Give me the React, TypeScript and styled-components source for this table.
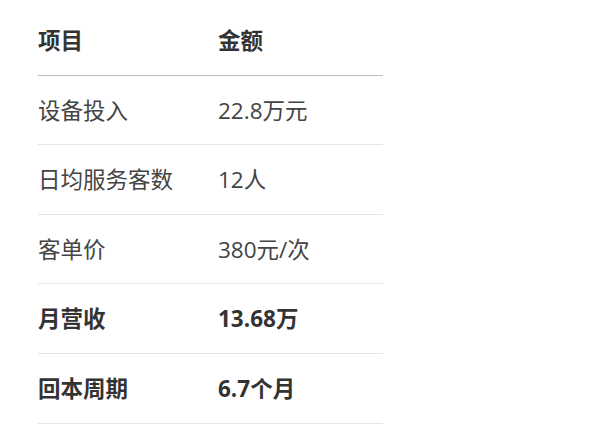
import React from "react";
import styled, { createGlobalStyle } from "styled-components";

const Global = createGlobalStyle`
  html, body { margin: 0; padding: 0; background: #ffffff; }
  body { font-family: "Open Sans", "Noto Sans CJK SC", sans-serif; color: #333333; }
`;

const Page = styled.div`
  padding: 6px 0 0 38px;
`;

const Table = styled.table`
  width: 345px;
  border-collapse: collapse;
  font-size: 22.5px;
`;

const Cell = styled.td<{ $bold?: boolean }>`
  padding: 21px 0 19px;
  line-height: 28.6px;
  text-align: left;
  font-weight: ${(p) => (p.$bold ? 700 : 400)};
  color: ${(p) => (p.$bold ? "#333333" : "#444444")};
  border-bottom: 1px solid #e5e5e5;
  &:first-child { width: 180px; }
`;

const HeadCell = styled.th`
  padding: 21px 0 19px;
  line-height: 28.6px;
  text-align: left;
  font-weight: 700;
  color: #333333;
  border-bottom: 1px solid #bdbdbd;
  &:first-child { width: 180px; }
`;

const rows = [
  { item: "设备投入", amount: "22.8万元" },
  { item: "日均服务客数", amount: "12人" },
  { item: "客单价", amount: "380元/次" },
  { item: "月营收", amount: "13.68万", bold: true },
  { item: "回本周期", amount: "6.7个月", bold: true },
];

export default function App() {
  return (
    <Page>
      <Global />
      <Table>
        <thead>
          <tr>
            <HeadCell>项目</HeadCell>
            <HeadCell>金额</HeadCell>
          </tr>
        </thead>
        <tbody>
          {rows.map((r) => (
            <tr key={r.item}>
              <Cell $bold={r.bold}>{r.item}</Cell>
              <Cell $bold={r.bold}>{r.amount}</Cell>
            </tr>
          ))}
        </tbody>
      </Table>
    </Page>
  );
}
